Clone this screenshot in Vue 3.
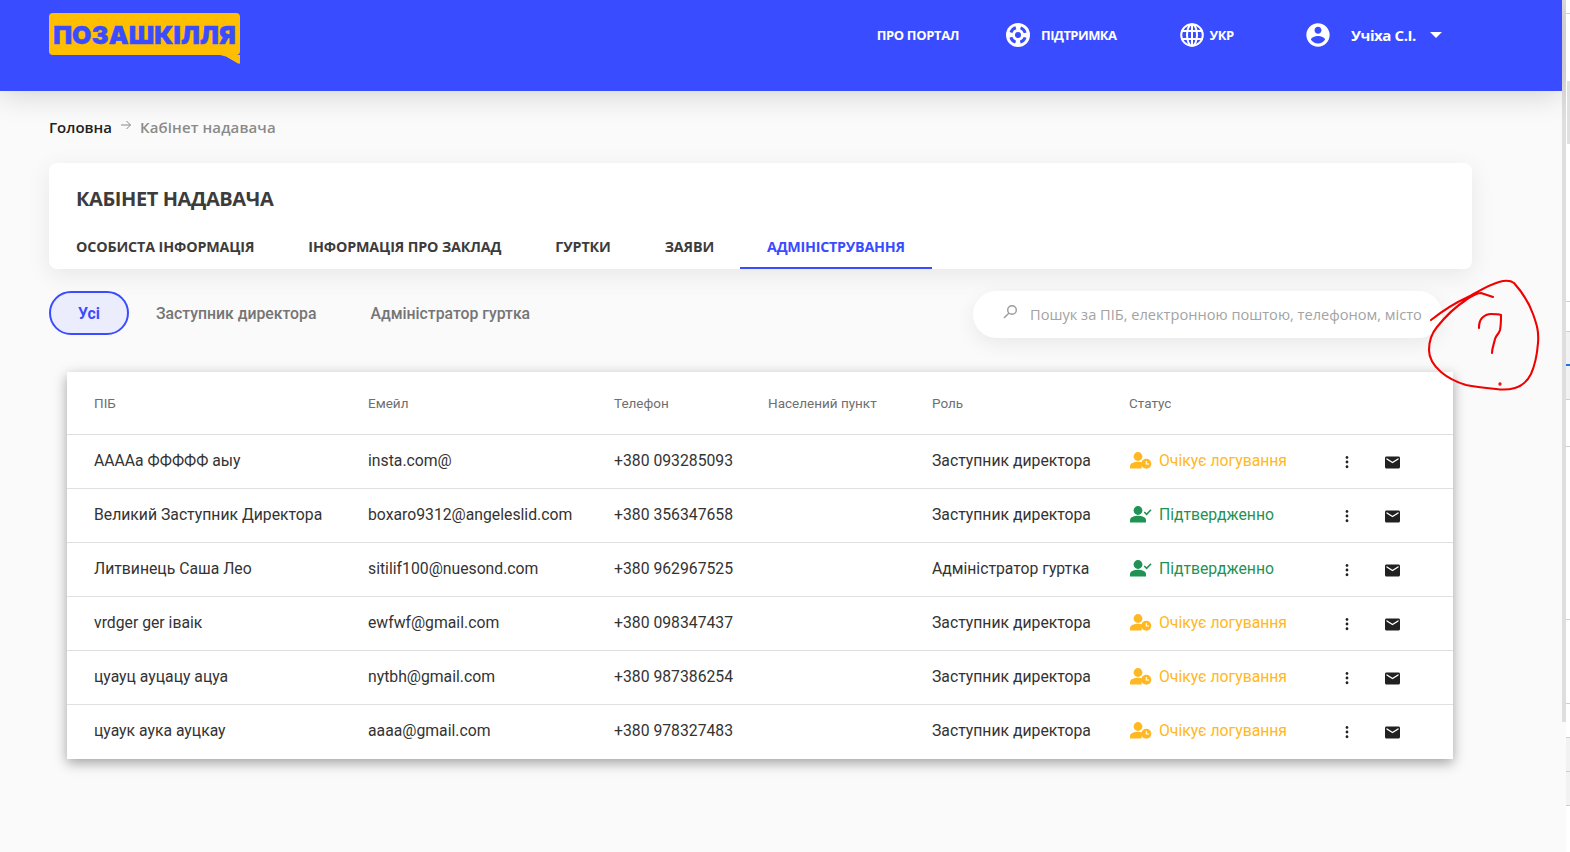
<script setup>
const pending = 'Очікує логування'
const columns = ['ПІБ', 'Емейл', 'Телефон', 'Населений пункт', 'Роль', 'Статус', '', '']
const rows = [
  { name: 'ААААа ФФФФФ аыу', email: 'insta.com@', phone: '+380 093285093', role: 'Заступник директора', done: false },
  { name: 'Великий Заступник Директора', email: 'boxaro9312@angeleslid.com', phone: '+380 356347658', role: 'Заступник директора', done: true },
  { name: 'Литвинець Саша Лео', email: 'sitilif100@nuesond.com', phone: '+380 962967525', role: 'Адміністратор гуртка', done: true },
  { name: 'vrdger ger іваік', email: 'ewfwf@gmail.com', phone: '+380 098347437', role: 'Заступник директора', done: false },
  { name: 'цуауц ауцацу ацуа', email: 'nytbh@gmail.com', phone: '+380 987386254', role: 'Заступник директора', done: false },
  { name: 'цуаук аука ауцкау', email: 'aaaa@gmail.com', phone: '+380 978327483', role: 'Заступник директора', done: false }
]
const tabs = ['ОСОБИСТА ІНФОРМАЦІЯ', 'ІНФОРМАЦІЯ ПРО ЗАКЛАД', 'ГУРТКИ', 'ЗАЯВИ', 'АДМІНІСТРУВАННЯ']
const statusText = (r) => (r.done ? 'Підтвердженно' : pending)
</script>

<template>
  <div class="root">
    <div class="main">
      <header class="header">
        <div class="logo">
          <span class="logo-text">ПОЗАШКІЛЛЯ</span>
          <svg class="logo-tail" width="20" height="9" viewBox="0 0 20 9"><path d="M0 0H20V7.500Q20 9.400 18 8.400L6 1.500Z" fill="#ffbf00" /></svg>
        </div>
        <nav class="nav">
          <a class="nav-item about">ПРО ПОРТАЛ</a>
          <a class="nav-item support">
            <svg width="24" height="24" viewBox="0 0 24 24"><circle cx="12" cy="12" r="12" fill="#fff" /><circle cx="12" cy="12" r="7.500" fill="none" stroke="#3a4cff" stroke-width="3" stroke-dasharray="7 4.780" stroke-dashoffset="-2.390" /><circle cx="12" cy="12" r="3" fill="#3a4cff" /></svg>
            <span>ПІДТРИМКА</span>
          </a>
          <a class="nav-item lang">
            <svg width="24" height="24" viewBox="0 0 24 24" fill="none" stroke="#fff" stroke-width="2"><circle cx="12" cy="12" r="10.800" /><ellipse cx="12" cy="12" rx="5" ry="10.800" /><path d="M12 1V23M1.500 8H22.500M1.500 16H22.500" /></svg>
            <span>УКР</span>
          </a>
          <a class="nav-item user">
            <svg width="28" height="28" viewBox="0 0 24 24"><path fill="#fff" d="M12 2C6.480 2 2 6.480 2 12s4.480 10 10 10 10-4.480 10-10S17.520 2 12 2zm0 3c1.660 0 3 1.340 3 3s-1.340 3-3 3-3-1.340-3-3 1.340-3 3-3zm0 14.200c-2.500 0-4.710-1.280-6-3.220.03-1.990 4-3.080 6-3.080 1.990 0 5.970 1.090 6 3.080-1.290 1.940-3.500 3.220-6 3.220z" /></svg>
            <span class="user-name">Учіха С.І.</span>
            <i class="caret"></i>
          </a>
        </nav>
      </header>

      <div class="breadcrumbs">
        <span class="crumb-home">Головна</span>
        <svg class="crumb-arrow" width="12" height="12" viewBox="0 0 12 12" fill="none" stroke="#8a8a8a" stroke-width="1"><path d="M1 6H10.500M6.500 2L10.500 6L6.500 10" /></svg>
        <span class="crumb-current">Кабінет надавача</span>
      </div>

      <section class="card">
        <h1 class="title">КАБІНЕТ НАДАВАЧА</h1>
        <div class="tabs">
          <div v-for="(t, i) in tabs" :key="t" class="tab" :class="{ active: i === 4 }">{{ t }}</div>
        </div>
      </section>

      <div class="filters">
        <div class="pill">Усі</div>
        <div class="filter">Заступник директора</div>
        <div class="filter">Адміністратор гуртка</div>
        <div class="search">
          <svg width="16" height="16" viewBox="0 0 16 16" fill="none" stroke="#9a9a9a" stroke-width="1.400"><circle cx="10" cy="6" r="4.300" /><path d="M6.800 9.200L2 14" /></svg>
          <span class="placeholder">Пошук за ПІБ, електронною поштою, телефоном, місто</span>
        </div>
      </div>

      <div class="table-wrap">
        <table class="table">
          <colgroup>
            <col class="c1" /><col class="c2" /><col class="c3" /><col class="c4" /><col class="c5" /><col class="c6" /><col class="c7" /><col />
          </colgroup>
          <thead>
            <tr>
              <th v-for="(c, i) in columns" :key="i">{{ c }}</th>
            </tr>
          </thead>
          <tbody>
            <tr v-for="r in rows" :key="r.email">
              <td>{{ r.name }}</td>
              <td>{{ r.email }}</td>
              <td>{{ r.phone }}</td>
              <td></td>
              <td>{{ r.role }}</td>
              <td>
                <div class="status" :class="r.done ? 'done' : 'wait'">
                  <svg v-if="r.done" width="22" height="17" viewBox="0 0 22 17" fill="#1f9254"><circle cx="8" cy="4.500" r="4.400" /><path d="M0 16.500V14C0 11 5 9.800 8 9.800S16 11 16 14V16.500Z" /><path d="M14.300 6L16.600 8.300L21 3.800" fill="none" stroke="#1f9254" stroke-width="1.600" /></svg>
                  <svg v-else width="22" height="17" viewBox="0 0 22 17" fill="#ffb822"><circle cx="8" cy="4.500" r="4.400" /><path d="M0 16.500V14C0 11 5 9.800 8 9.800C9.500 9.800 11 10 12.300 10.500L11.500 16.500Z" /><circle cx="16.300" cy="11.800" r="5" /><path d="M16.300 9V12H19" fill="none" stroke="#fff" stroke-width="1.100" /></svg>
                  <span>{{ statusText(r) }}</span>
                </div>
              </td>
              <td class="icon-cell">
                <svg class="kebab" width="20" height="20" viewBox="0 0 24 24" fill="#212121"><path d="M12 8c.9 0 1.700-.7 1.700-1.500S12.900 4.800 12 4.800s-1.700.8-1.700 1.700S11.100 8 12 8zm0 2.300c-.9 0-1.700.8-1.700 1.700s.8 1.700 1.700 1.700 1.700-.8 1.700-1.700-.8-1.700-1.700-1.700zm0 5.700c-.9 0-1.700.8-1.700 1.700s.8 1.700 1.700 1.700 1.700-.8 1.700-1.700-.8-1.700-1.700-1.700z" /></svg>
              </td>
              <td class="icon-cell">
                <svg class="mail" width="15" height="15" viewBox="2 2 20 20" fill="#212121"><path d="M20 4H4c-1.100 0-1.990.9-1.990 2L2 18c0 1.100.9 2 2 2h16c1.100 0 2-.9 2-2V6c0-1.100-.9-2-2-2zm0 4l-8 5-8-5V6l8 5 8-5v2z" /></svg>
              </td>
            </tr>
          </tbody>
        </table>
      </div>
    </div>

    <div class="scrollbar"></div>

    <div class="side-strip">
      <i class="thumb"></i>
      <i class="band band-a"></i>
      <i class="band band-b"></i>
      <i class="accent"></i>
      <i v-for="y in [13, 301, 331, 399, 446, 619, 703, 737, 771, 805]" :key="y" class="tick" :style="{ top: y + 'px' }"></i>
    </div>

    <svg class="scribble" width="1570" height="852" viewBox="0 0 1570 852" fill="none" stroke="#f00000" stroke-width="2.100" stroke-linecap="round" stroke-linejoin="round">
      <path d="M1431 320C1445 309 1455 303 1466 298C1478 292 1488 285 1499 282C1506 280 1510 280 1514 283C1523 293 1529 303 1533 314C1537 325 1539 332 1538 343C1537 356 1535 365 1531 374C1527 382 1522 386 1515 388C1508 390 1503 390 1496 389C1485 388 1475 387 1466 385C1456 382 1448 378 1441 372C1433 365 1429 358 1429 350C1429 341 1432 333 1437 327C1445 317 1455 307 1466 300C1472 296 1476 293 1481 293L1493 297" />
      <path d="M1479 328C1479 323 1480 320 1482 318C1485 315 1488 314 1491 314C1495 314 1498 314 1501 315C1501 320 1501 325 1500 330C1499 334 1496 335 1495 339C1494 344 1492 348 1492 353" />
      <circle cx="1500" cy="384" r=".6" fill="#f00000" />
    </svg>
  </div>
</template>

<style>
html, body { margin: 0; background: #fafafa; overflow: hidden; }
</style>

<style scoped>
.root {
  position: relative;
  display: flex;
  height: 852px;
  width: 1570px;
  overflow: hidden;
  background: #fafafa;
  font-family: "Open Sans", sans-serif;
}
.main { width: 1562px; flex: none; }
.header {
  height: 91px;
  box-sizing: border-box;
  background: #3a4cff;
  padding: 13px 0 0 49px;
  display: flex;
  justify-content: space-between;
  align-items: flex-start;
  box-shadow: 0 4px 30px rgba(0, 0, 0, .16);
  position: relative;
}
.logo {
  position: relative;
  width: 191px;
  height: 42px;
  background: #ffbf00;
  border-radius: 4px;
  display: flex;
  align-items: center;
  justify-content: center;
  padding-top: 2px;
  box-sizing: border-box;
}
.logo-text {
  font-family: "Inter", sans-serif;
  font-weight: 900;
  font-size: 25px;
  letter-spacing: .2px;
  color: #3a4cff;
  -webkit-text-stroke: .5px #3a4cff;
  line-height: 1;
}
.logo-tail { position: absolute; right: 0; top: 42px; }
.nav {
  display: flex;
  align-items: center;
  height: 44px;
  color: #fff;
  font-family: "Open Sans", sans-serif;
  font-weight: 700;
  font-size: 13px;
  letter-spacing: -.35px;
}
.nav-item { display: flex; align-items: center; color: #fff; white-space: nowrap; }
.about { margin-right: 47px; }
.support { gap: 11px; margin-right: 64px; letter-spacing: -.55px; }
.lang { gap: 5px; margin-right: 70px; }
.user-name { font-size: 15px; margin-left: 19px; letter-spacing: -.4px; }
.caret {
  margin-left: 14px;
  margin-right: 120px;
  width: 0;
  height: 0;
  border-left: 6px solid transparent;
  border-right: 6px solid transparent;
  border-top: 6px solid #fff;
}
.breadcrumbs {
  margin-left: 49px;
  height: 72px;
  display: flex;
  align-items: center;
  font-size: 15px;
  font-weight: 600;
}
.crumb-home { color: #212121; }
.crumb-arrow { margin: 0 8px 4px 8px; }
.crumb-current { color: #8a8a8a; letter-spacing: .12px; }
.card {
  margin-left: 49px;
  width: 1423px;
  height: 106px;
  background: #fff;
  border-radius: 8px;
  box-shadow: 0 6px 24px rgba(0, 0, 0, .08);
  box-sizing: border-box;
  padding-top: 22px;
}
.title {
  margin: 0 0 0 27px;
  font-size: 20px;
  line-height: 28px;
  font-weight: 700;
  color: #3c3c3c;
  letter-spacing: -.4px;
}
.tabs { display: flex; margin-top: 14px; }
.tab {
  padding: 0 27px;
  height: 42px;
  line-height: 40px;
  box-sizing: border-box;
  font-size: 14.300px;
  font-weight: 700;
  color: #3c3c3c;
  letter-spacing: -.13px;
  white-space: nowrap;
}
.tab.active {
  color: #3a4cff;
  border-bottom: 2px solid #3a4cff;
  width: 192px;
  margin-left: -1px;
  letter-spacing: -.25px;
}
.filters {
  margin: 22px 0 0 49px;
  width: 1393px;
  display: flex;
  align-items: flex-start;
  font-family: "Roboto", sans-serif;
  font-size: 15.800px;
  font-weight: 500;
  color: #757575;
}
.pill {
  width: 80px;
  height: 44px;
  box-sizing: border-box;
  border: 2px solid #3a4cff;
  border-radius: 22px;
  background: #ebedfd;
  color: #3a4cff;
  font-weight: 700;
  text-align: center;
  line-height: 42px;
}
.filter { line-height: 46px; margin: 0 27px; white-space: nowrap; }
.search {
  margin-left: auto;
  width: 469px;
  height: 47px;
  box-sizing: border-box;
  background: #fff;
  border-radius: 24px;
  box-shadow: 0 6px 20px rgba(0, 0, 0, .07);
  display: flex;
  align-items: center;
  padding-left: 29px;
  font-family: "Open Sans", sans-serif;
  font-weight: 400;
  font-size: 14.620px;
  color: #a3a3a3;
}
.search svg { margin-bottom: 6px; flex: none; }
.placeholder { margin-left: 12px; padding-bottom: 2px; white-space: nowrap; }
.table-wrap {
  margin: 34px 0 0 67px;
  width: 1386px;
  padding-bottom: 1px;
  background: #fff;
  box-shadow: 0 4px 12px rgba(0, 0, 0, .36);
}
.table {
  width: 100%;
  table-layout: fixed;
  border-collapse: collapse;
  font-family: "Roboto", sans-serif;
  font-size: 15.750px;
  color: #333;
}
.c1 { width: 301px; }
.c2 { width: 246px; }
.c3 { width: 154px; }
.c4 { width: 164px; }
.c5 { width: 197px; }
.c6 { width: 203px; }
.c7 { width: 45px; }
.table th {
  height: 62px;
  padding: 1px 0 0 27px;
  box-sizing: border-box;
  text-align: left;
  font-weight: 400;
  font-size: 13.500px;
  color: #6f6f6f;
  border-bottom: 1px solid #e0e0e0;
  white-space: nowrap;
}
.table td {
  height: 54px;
  padding: 0 0 2px 27px;
  box-sizing: border-box;
  white-space: nowrap;
  border-bottom: 1px solid #e0e0e0;
}
.table tbody tr:last-child td { border-bottom: 0; }
.table th:nth-child(n+2), .table td:nth-child(n+2) { padding-left: 0; }
.table td.icon-cell { padding: 0; }
.status { display: flex; align-items: center; gap: 7px; margin-left: 1px; }
.status svg { flex: none; }
.status.wait { color: #ffb822; }
.status.done { color: #1f9254; }
.kebab { display: block; margin: 2px 0 0 5px; }
.mail { display: block; margin: 2px 0 0 8px; }
.scrollbar {
  width: 4px;
  height: 722px;
  flex: none;
  background: #dedede;
}
.side-strip {
  width: 4px;
  height: 852px;
  flex: none;
  background: #fff;
  position: relative;
}
.thumb { position: absolute; left: 1px; top: 81px; width: 3px; height: 63px; background: #e0e0e0; }
.band { position: absolute; left: 0; width: 4px; background: #f2f2f2; }
.band-a { top: 331px; height: 68px; }
.band-b { top: 737px; height: 68px; }
.accent { position: absolute; left: 0; top: 364px; width: 4px; height: 2px; background: #1a73e8; }
.tick { position: absolute; left: 0; width: 4px; height: 1px; background: #cfcfcf; }
.scribble { position: absolute; left: 0; top: 0; pointer-events: none; }
</style>
